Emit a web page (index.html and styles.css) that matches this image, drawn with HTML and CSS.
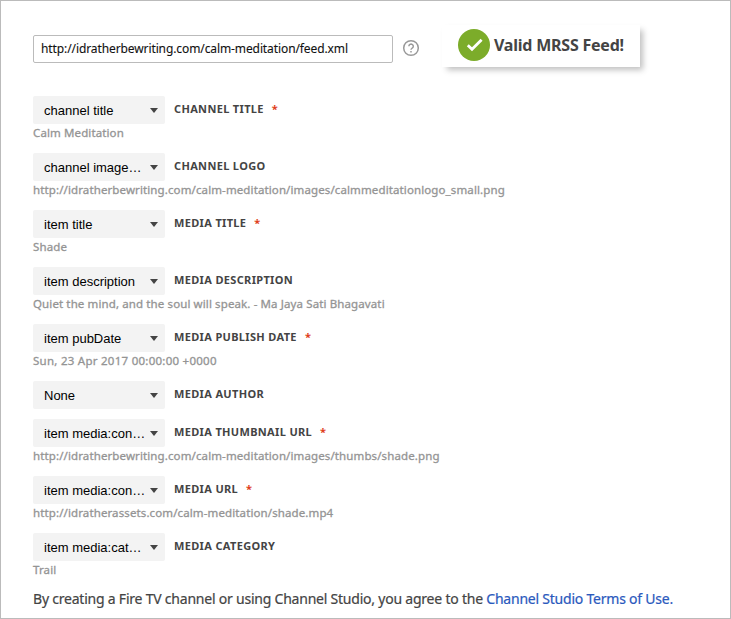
FILE: index.html
```html
<!DOCTYPE html>
<html lang="en">
<head>
<meta charset="utf-8">
<title>Channel Studio</title>
<link rel="stylesheet" href="styles.css">
</head>
<body>
<main class="panel">
  <header class="feed">
    <div class="feed-url">http://idratherbewriting.com/calm-meditation/feed.xml</div>
    <svg class="help" viewBox="0 0 18 18"><circle cx="9" cy="9" r="7.3"/><path d="M6.9 7.3a2.2 2.1 0 1 1 3.4 1.7c-.9.6-1.3.9-1.3 1.8M9 12v1.5"/></svg>
    <div class="valid">
      <svg class="check" viewBox="0 0 32 32"><circle cx="16" cy="16" r="16"/><path d="M9.8 16.2l4.2 4 9.6-9.4"/></svg>
      <span>Valid MRSS Feed!</span>
    </div>
  </header>
  <section class="fields">
    <div class="field"><div class="line"><div class="select">channel title</div><span class="label">CHANNEL TITLE</span><span class="req">*</span></div><div class="hint">Calm Meditation</div></div>
    <div class="field"><div class="line"><div class="select">channel image…</div><span class="label">CHANNEL LOGO</span></div><div class="hint">http://idratherbewriting.com/calm-meditation/images/calmmeditationlogo_small.png</div></div>
    <div class="field"><div class="line"><div class="select">item title</div><span class="label">MEDIA TITLE</span><span class="req">*</span></div><div class="hint">Shade</div></div>
    <div class="field"><div class="line"><div class="select">item description</div><span class="label">MEDIA DESCRIPTION</span></div><div class="hint">Quiet the mind, and the soul will speak. - Ma Jaya Sati Bhagavati</div></div>
    <div class="field"><div class="line"><div class="select">item pubDate</div><span class="label">MEDIA PUBLISH DATE</span><span class="req">*</span></div><div class="hint date">Sun, 23 Apr 2017 00:00:00 +0000</div></div>
    <div class="field"><div class="line"><div class="select">None</div><span class="label">MEDIA AUTHOR</span></div></div>
    <div class="field"><div class="line"><div class="select">item media:con…</div><span class="label">MEDIA THUMBNAIL URL</span><span class="req">*</span></div><div class="hint">http://idratherbewriting.com/calm-meditation/images/thumbs/shade.png</div></div>
    <div class="field"><div class="line"><div class="select">item media:con…</div><span class="label">MEDIA URL</span><span class="req">*</span></div><div class="hint">http://idratherassets.com/calm-meditation/shade.mp4</div></div>
    <div class="field"><div class="line"><div class="select">item media:cat…</div><span class="label">MEDIA CATEGORY</span></div><div class="hint">Trail</div></div>
  </section>
  <p class="terms">By creating a Fire TV channel or using Channel Studio, you agree to the <a>Channel Studio Terms of Use.</a></p>
</main>
</body>
</html>
```
FILE: styles.css
```css
* { box-sizing: border-box; }
body { margin: 0; background: #fff; font-family: "Noto Sans", sans-serif; color: #444; }
.panel { width: 731px; height: 619px; border: 1px solid #bbb; padding: 26px 32px 0; overflow: hidden; }
.feed { display: flex; align-items: flex-start; height: 69px; }
.feed-url { width: 360px; height: 28px; margin-top: 8px; padding-left: 7px; border: 1px solid #bbb; border-radius: 2px; font-size: 12px; line-height: 26px; letter-spacing: -.1px; -webkit-text-stroke: .1px; color: #111; white-space: nowrap; }
.help { width: 18px; height: 18px; margin: 12px 0 0 9px; fill: none; stroke: #999; stroke-width: 1.5; }
.valid { display: flex; align-items: center; width: 198px; height: 42px; margin-left: 22px; margin-top: -2px; padding: 0 0 2px 16px; box-shadow: 4px 4px 6px -1px rgba(0,0,0,.25); font-size: 16px; font-weight: 700; letter-spacing: -.22px; white-space: nowrap; }
.check { width: 32px; height: 32px; margin-right: 4px; fill: #7cac2a; }
.check path { fill: none; stroke: #fff; stroke-width: 2.8; }
.fields { display: flex; flex-direction: column; gap: 10px; }
.line { display: flex; height: 28px; }
.select { position: relative; width: 132px; height: 28px; margin-right: 9px; padding-left: 11px; border-radius: 2px; background: #f3f3f3; font: 13px/29px "Liberation Sans", sans-serif; color: #000; }
.select::after { content: ""; position: absolute; right: 7px; top: 12px; border: 4px solid transparent; border-top: 5px solid #444; border-bottom: 0; }
.label { font-size: 11px; font-weight: 700; line-height: 26px; letter-spacing: .34px; }
.req { margin-left: 8px; font-size: 11px; font-weight: 700; line-height: 26px; color: #e03e1a; }
.hint { height: 19px; font-size: 11.5px; line-height: 17px; letter-spacing: .115px; -webkit-text-stroke: .3px; color: #949494; white-space: nowrap; }
.date { letter-spacing: .26px; }
.terms { margin: 9px 0 0; font-size: 14px; line-height: 20px; letter-spacing: -.22px; -webkit-text-stroke: .2px; white-space: nowrap; }
.terms a { color: #2a59bd; }
```
